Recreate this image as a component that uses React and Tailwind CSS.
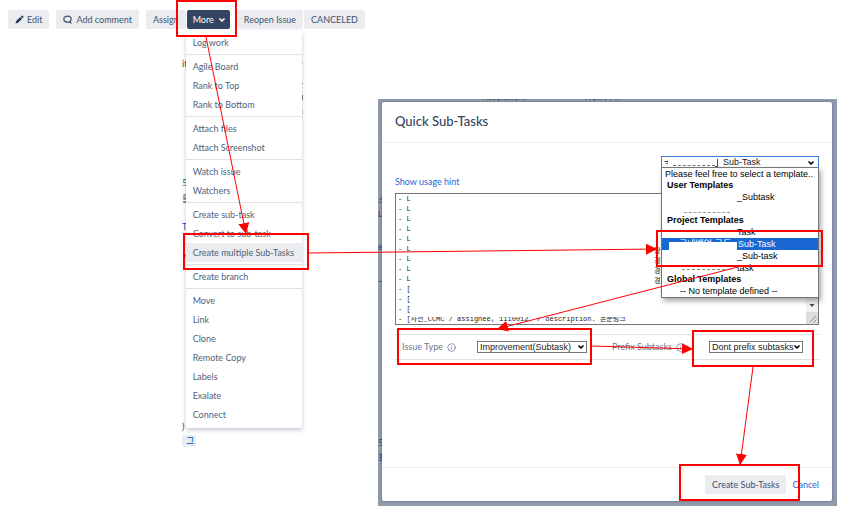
import React from 'react';
import { ChevronDown, Info } from 'lucide-react';

const menuGroups = [
  ['Log work'],
  ['Agile Board', 'Rank to Top', 'Rank to Bottom'],
  ['Attach files', 'Attach Screenshot'],
  ['Watch issue', 'Watchers'],
  ['Create sub-task', 'Convert to sub-task', 'Create multiple Sub-Tasks'],
  ['Create branch'],
  ['Move', 'Link', 'Clone', 'Remote Copy', 'Labels', 'Exalate', 'Connect'],
];

const subTaskLines = [
  ...Array(9).fill('- L'),
  ...Array(3).fill('- ['),
  '- [사전_CCMC / assignee, 1110012  / description. 본문링크',
].join('\n');

const boxes = [
  { x: 177, y: 1, w: 59, h: 35 },
  { x: 184, y: 234, w: 124, h: 35 },
  { x: 657, y: 231, w: 165, h: 35 },
  { x: 398, y: 329, w: 193, h: 35 },
  { x: 693, y: 331, w: 120, h: 35 },
  { x: 680, y: 465, w: 119, h: 35 },
];

const arrows = [
  [206, 37, 246, 234],
  [309, 253, 657, 249],
  [738, 267, 497, 329],
  [592, 346, 693, 349],
  [753, 367, 740, 465],
];

function ToolbarButton({ children, className = 'bg-[#ebecf0] px-[7px] text-[#42526e]' }) {
  return (
    <button className={`flex h-[19px] items-center rounded-[2px] whitespace-nowrap ${className}`}>
      {children}
    </button>
  );
}

function MoreMenu() {
  return (
    <div className="absolute top-[21px] left-0 -ml-px w-[116px] rounded-[2px] bg-white pt-0.5 pb-1 shadow-[0_2px_4px_rgba(9,30,66,0.25)]">
      {menuGroups.map((items, i) => (
        <ul key={items[0]} className={i > 0 ? 'mt-0.5 border-t border-[#dfe1e6] pt-0.5' : ''}>
          {items.map(item => (
            <li key={item}>
              <a
                href="#"
                className={`block h-[19px] pl-[7px] leading-[19px] whitespace-nowrap text-[#505f79] ${item === 'Create multiple Sub-Tasks' ? 'bg-[#ebecf0]' : ''}`}
              >
                {item}
              </a>
            </li>
          ))}
        </ul>
      ))}
    </div>
  );
}

function Toolbar() {
  return (
    <div className="flex gap-[7px] pt-[10px] pl-2">
      <ToolbarButton>
        <svg viewBox="0 0 10 10" className="mr-[3px] h-[9px] w-[9px]" fill="#253858">
          <path d="M.6 9.4l.7-2.8L5.8 2.1 7.9 4.2 3.4 8.7zM6.4 1.5l.8-.8q.5-.4 1 0l1.1 1.1q.4.5 0 1l-.8.8z" />
        </svg>
        Edit
      </ToolbarButton>
      <ToolbarButton>
        <svg viewBox="0 0 10 10" className="mr-1 h-[9px] w-[9px]" fill="none" stroke="#42526e" strokeWidth="1.4">
          <path d="M6.6 7.7C3.500 8.500.9 6.900.9 4.600.9 2.600 2.700 1.300 5 1.300s4.100 1.300 4.100 3.300c0 1.100-.5 1.900-1.300 2.500l.7 1.400z" />
        </svg>
        Add comment
      </ToolbarButton>
      <div className="flex gap-px">
        <ToolbarButton>Assign</ToolbarButton>
        <div className="relative">
          <ToolbarButton className="bg-[#344563] pr-1 pl-1.5 text-white">
            More
            <ChevronDown size={8} strokeWidth={5} className="ml-1" />
          </ToolbarButton>
          <MoreMenu />
        </div>
      </div>
      <div className="flex gap-px">
        <ToolbarButton>Reopen Issue</ToolbarButton>
        <ToolbarButton>CANCELED</ToolbarButton>
      </div>
    </div>
  );
}

// What still shows of the issue page on both sides of the open menu
function IssueRemains() {
  return (
    <div className="mt-7 flex w-[303px] justify-between pl-[182px] text-[#344563]">
      <div className="flex flex-col">
        <span className="h-[119px] leading-[14px]">it</span>
        <span className="h-[16px]">도</span>
        <span className="h-[28px]">를</span>
        <span className="h-[31px] text-[#0052cc]">T</span>
        <span className="h-[169px] text-[#0052cc]">?</span>
        <span className="h-[15px]">)</span>
        <span className="flex h-[12px] w-[14px] items-center rounded-[2px] bg-[#ebecf0] pl-1 text-[#0052cc]">그</span>
      </div>
      <div className="flex w-[2px] flex-col overflow-hidden pt-[6px]">
        <span className="mb-[19px] h-px bg-[#b3d4ff]" />
        <span className="mb-[11px] h-px bg-[#8993a4]" />
        <span className="mb-[10px] h-[5px] bg-[#8c7f78]" />
        <span className="h-[5px] bg-[#c9e2f5]" />
      </div>
    </div>
  );
}

function Option({ children, className = '' }) {
  return <li className={`relative h-3 leading-3 whitespace-nowrap ${className}`} role="option">{children}</li>;
}

function GroupLabel({ children }) {
  return <li className="h-[11px] pl-[5px] leading-[11px] font-bold" role="presentation">{children}</li>;
}

function TemplatePicker() {
  return (
    <div className="relative z-10 ml-auto h-[13px] w-[158px] font-['Liberation_Sans','Noto_Sans_CJK_KR',sans-serif] text-[9px] text-black">
      <select
        aria-label="Template"
        className="block h-[13px] w-full appearance-none border border-[#3b82e0] bg-white pl-[61px] text-[9px] leading-[11px] text-[#222] outline-none"
      >
        <option>Sub-Task</option>
      </select>
      <ChevronDown size={8} strokeWidth={5} className="absolute top-[3px] right-[4px]" />
      <span className="absolute top-[2px] left-[3px] h-[9px] w-1 overflow-hidden leading-[9px]">국</span>
      <span className="absolute bottom-[3px] left-[12px] w-[42px] border-b border-dashed border-[#777]" />
      <span className="absolute top-[3px] left-[54px] h-[8px] w-[3px] border-r border-b border-[#444]" />
      <ul className="absolute top-[11px] left-0 w-full border border-[#767676] bg-white shadow-[2px_3px_5px_rgba(0,0,0,0.35)]" role="listbox">
        <Option className="pl-[3px]">Please feel free to select a template..</Option>
        <GroupLabel>User Templates</GroupLabel>
        <Option className="pl-[75px]">_Subtask</Option>
        <Option>
          <span className="absolute bottom-[2px] left-[22px] w-[46px] border-b border-dashed border-[#999]" />
        </Option>
        <GroupLabel>Project Templates</GroupLabel>
        <Option className="pl-[75px]">Task</Option>
        <Option className="bg-[#1967d2] pl-[17px] text-white">
          국내백업 구동
          <span className="absolute top-0 left-[76px]">Sub-Task</span>
          <span className="absolute top-1 left-[7px] h-2 w-[68px] bg-white" />
        </Option>
        <Option className="pl-[75px]">_Sub-task</Option>
        <Option className="pl-[75px]">
          task
          <span className="absolute bottom-1 left-[20px] w-[48px] border-b border-dashed border-[#888]" />
        </Option>
        <GroupLabel>Global Templates</GroupLabel>
        <Option className="pl-[18px]">-- No template defined --</Option>
      </ul>
    </div>
  );
}

function TaskEditor() {
  return (
    <div className="relative mt-[5px] border border-[#767676] font-['Liberation_Mono','Noto_Sans_CJK_KR',monospace] text-[7px] leading-[10px] text-[#222]">
      <textarea
        aria-label="Sub-tasks"
        defaultValue={subTaskLines}
        className="block h-[130px] w-full resize-none overflow-hidden px-0.5 outline-none"
      />
      <span className="absolute bottom-[7px] left-[15px] h-[3px] w-[260px] bg-white" />
      <span className="absolute top-[52px] right-[157px] w-[7px] overflow-hidden">장 경 경 경</span>
      <span className="absolute top-0 right-0 bottom-0 flex w-3 flex-col justify-end bg-[#f1f1f1]">
        <svg viewBox="0 0 12 24" className="h-6 w-3">
          <path d="M3.500 4h5l-2.500 3z" fill="#444" />
          <path d="M0 12h12v12H0z" fill="#ddd" />
          <path d="M4 22l6-6M7.500 22.500l3-3" stroke="#777" strokeWidth=".8" />
        </svg>
      </span>
    </div>
  );
}

function SmallSelect({ id, value, className }) {
  return (
    <span className={`relative ${className}`}>
      <select
        id={id}
        className="block h-3 w-full appearance-none border border-[#767676] bg-white pl-0.5 font-['Liberation_Sans',sans-serif] text-[9px] leading-[10px] text-[#222]"
      >
        <option>{value}</option>
      </select>
      <ChevronDown size={8} strokeWidth={5} className="absolute top-[2px] right-[2px] text-black" />
    </span>
  );
}

function QuickSubTasksDialog() {
  return (
    <div className="relative mt-[99px] mr-[10px] flex-1 self-start overflow-hidden bg-[#919aab] pt-[3px] pr-[5px] pb-[5px] pl-1">
      <div className="absolute inset-x-0 top-0 h-[3px] overflow-hidden text-[#344563]">
        <span className="absolute bottom-0 left-[104px] leading-[10px]">Resolution:</span>
        <span className="absolute bottom-0 left-[205px] leading-[10px]">Won't Fix</span>
      </div>
      <div className="absolute top-[94px] left-0 flex w-1 flex-col overflow-hidden text-[#344563]">
        <span className="h-[15px]">소</span>
        <span className="h-[32px]">나</span>
        <span className="h-[30px] text-[#0747a6]">e</span>
        <span className="h-[166px] text-[#0747a6]">_</span>
        <span className="h-[15px]">도</span>
        <span className="text-[#0747a6]">표</span>
      </div>
      <div className="relative rounded-[2px] bg-white shadow-[0_0_2px_rgba(9,30,66,0.5)]" role="dialog" aria-labelledby="dialog-title">
        <header className="flex h-[41px] items-center border-b border-[#ebecf0] px-[13px]">
          <h2 id="dialog-title" className="text-[13px] font-medium text-[#344563]">Quick Sub-Tasks</h2>
        </header>
        <div className="h-[324px] px-[13px] pt-[13px]">
          <TemplatePicker />
          <a href="#" className="mt-[6px] block h-[13px] leading-[13px] text-[#1f66d6]">Show usage hint</a>
          <TaskEditor />
          <div className="mt-[9px] flex h-[26px] items-center border-y border-[#dfe1e6] pl-[7px] text-[#6b778c]">
            <label htmlFor="issue-type" className="flex w-[75px] items-center gap-1">
              Issue Type <Info size={9} />
            </label>
            <SmallSelect id="issue-type" value="Improvement(Subtask)" className="w-[110px]" />
            <label htmlFor="prefix" className="ml-[25px] flex w-[97px] items-center gap-1 whitespace-nowrap">
              Prefix Subtasks <Info size={9} />
            </label>
            <SmallSelect id="prefix" value="Dont prefix subtasks" className="w-[94px]" />
          </div>
        </div>
        <footer className="flex h-[34px] items-center justify-end gap-[6px] border-t border-[#ebecf0] pr-[13px]">
          <ToolbarButton>Create Sub-Tasks</ToolbarButton>
          <a href="#" className="text-[#1f66d6]">Cancel</a>
        </footer>
      </div>
    </div>
  );
}

function Annotations() {
  return (
    <svg width="847" height="509" className="pointer-events-none absolute top-0 left-0 z-20" stroke="#f00" fill="none">
      <defs>
        <marker id="head" markerWidth="12" markerHeight="12" refX="11" refY="6" orient="auto" markerUnits="userSpaceOnUse">
          <path d="M0 .5L11 6L0 11.500z" fill="#f00" stroke="none" />
        </marker>
      </defs>
      {boxes.map(b => (
        <rect key={`${b.x}-${b.y}`} x={b.x} y={b.y} width={b.w} height={b.h} strokeWidth="2" />
      ))}
      {arrows.map(([x1, y1, x2, y2]) => (
        <line key={x1} x1={x1} y1={y1} x2={x2} y2={y2} markerEnd="url(#head)" />
      ))}
    </svg>
  );
}

export default function App() {
  return (
    <div className="relative flex min-h-screen bg-white font-['Lato','Noto_Sans_CJK_KR',sans-serif] text-[9px]">
      <div className="w-[378px] shrink-0">
        <div className="relative z-10">
          <Toolbar />
        </div>
        <IssueRemains />
      </div>
      <QuickSubTasksDialog />
      <Annotations />
    </div>
  );
}
